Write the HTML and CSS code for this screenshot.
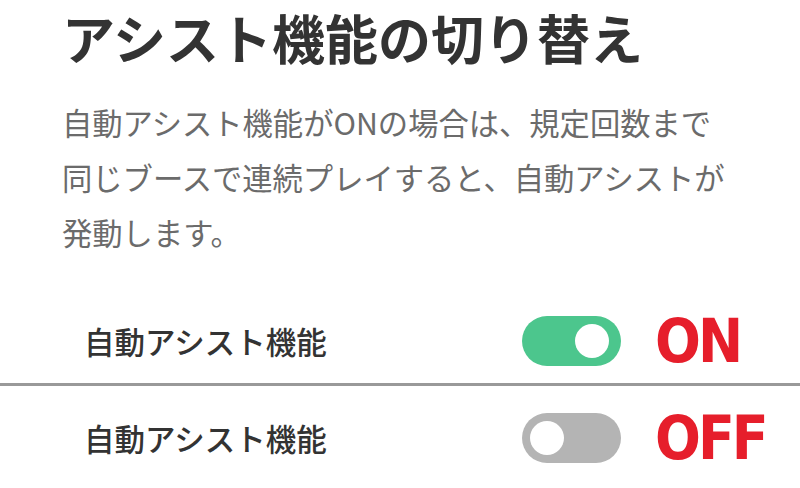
FILE: index.html
```html
<!DOCTYPE html>
<html lang="ja">
<head>
<meta charset="utf-8">
<title>アシスト機能の切り替え</title>
<link rel="stylesheet" href="styles.css">
</head>
<body>
<main class="page">
  <section class="intro">
    <h1 class="title">アシスト機能の切り替え</h1>
    <p class="desc">自動アシスト機能がONの場合は、規定回数まで<br>同じブースで連続プレイすると、自動アシストが<br>発動します。</p>
  </section>
  <div class="row row-on">
    <span class="label">自動アシスト機能</span>
    <span class="toggle toggle-on"><span class="knob"></span></span>
    <span class="state">ON</span>
  </div>
  <div class="divider"></div>
  <div class="row row-off">
    <span class="label">自動アシスト機能</span>
    <span class="toggle toggle-off"><span class="knob"></span></span>
    <span class="state">OFF</span>
  </div>
</main>
</body>
</html>
```

FILE: styles.css
```css
html, body {
  margin: 0;
  padding: 0;
  background: #ffffff;
}

body {
  font-family: "Noto Sans CJK JP", "Noto Sans", sans-serif;
  color: #333333;
  width: 800px;
  height: 488px;
  overflow: hidden;
}

.page {
  display: flex;
  flex-direction: column;
}

.intro {
  padding: 0 0 0 62px;
}

.title {
  margin: 0;
  font-size: 53px;
  line-height: 74px;
  font-weight: 700;
  color: #333333;
  letter-spacing: 0;
}

.desc {
  margin: 21px 0 0 0;
  font-size: 30.3px;
  line-height: 55px;
  font-weight: 400;
  color: #6b6b6b;
}

.row {
  display: flex;
  align-items: center;
  padding-left: 84px;
}

.row-on {
  height: 84px;
  margin-top: 39px;
}

.row-off {
  height: 103px;
}

.label {
  width: 438px;
  font-size: 30.5px;
  font-weight: 500;
  color: #333333;
}

.toggle {
  width: 99px;
  height: 50px;
  border-radius: 25px;
  display: flex;
  align-items: center;
  box-sizing: border-box;
}

.toggle-on {
  background: #4cc68d;
  justify-content: flex-end;
  padding-right: 12px;
}

.toggle-off {
  background: #b4b4b4;
  justify-content: flex-start;
  padding-left: 8px;
}

.knob {
  width: 34px;
  height: 34px;
  border-radius: 50%;
  background: #ffffff;
}

.state {
  margin-left: 34px;
  font-family: "Liberation Sans Narrow", "DejaVu Sans Condensed", "Liberation Sans", sans-serif;
  font-stretch: condensed;
  font-weight: 700;
  font-size: 60px;
  letter-spacing: -3px;
  line-height: 1;
  color: #e61e2b;
}

.divider {
  height: 3px;
  background: #999999;
}
```
